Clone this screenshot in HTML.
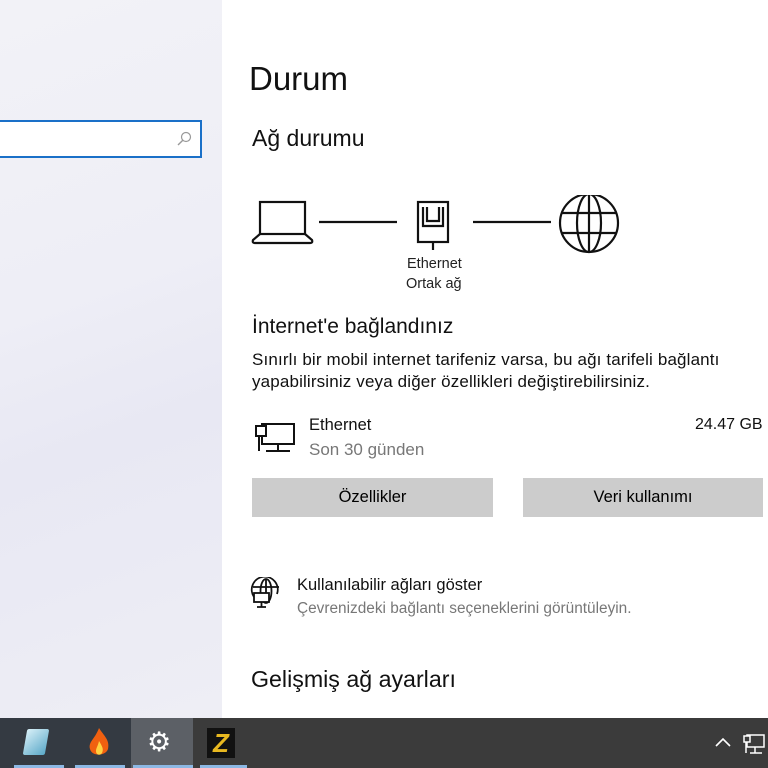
<!DOCTYPE html>
<html><head><meta charset="utf-8"><style>
*{margin:0;padding:0;box-sizing:border-box}
body{width:768px;height:768px;overflow:hidden;background:#fff;font-family:"Liberation Sans",sans-serif;color:#000;position:relative}
.a{position:absolute;white-space:nowrap}
#left{position:absolute;left:0;top:0;width:222px;height:718px;background:linear-gradient(160deg,#f2f2f7 0%,#eeeef6 40%,#e8e8f3 60%,#eeeef5 100%)}
#search{position:absolute;left:-2px;top:120px;width:204px;height:38px;border:2px solid #1a70c8;background:#fff}
.btn{position:absolute;height:39px;background:#cccccc;font-size:16.5px;text-align:center;line-height:39px}
#tb{position:absolute;left:0;top:718px;width:768px;height:50px;background:#3b3b3b}
</style></head><body>
<div id="left"><div id="search">
<svg class="a" style="left:176px;top:9px" width="16" height="16" viewBox="0 0 16 16"><circle cx="10" cy="6" r="4.5" fill="none" stroke="#999" stroke-width="1.2"/><path d="M6.8 9.2 L2 14" stroke="#999" stroke-width="1.4"/></svg>
</div></div>

<div class="a" style="left:249px;top:60px;font-size:33px;color:#111">Durum</div>
<div class="a" style="left:252px;top:125px;font-size:23px;color:#111">Ağ durumu</div>

<svg class="a" style="left:250px;top:195px" width="372" height="100" viewBox="0 0 372 100" fill="none" stroke="#111" stroke-width="2.2">
<rect x="10" y="7" width="45" height="32"/>
<path d="M10 39 L3 45 Q2 48 5 48 L60 48 Q63 48 62 45 L55 39"/>
<path d="M69 27 H147"/>
<rect x="168" y="7" width="30" height="40"/>
<path d="M173 12 V31 H193 V12 M177 12 V26 H189 V12"/>
<path d="M183 47 V55"/>
<path d="M223 27 H301"/>
<circle cx="339" cy="28" r="29"/>
<ellipse cx="339" cy="28" rx="12" ry="29"/>
<path d="M311 18 H367 M311 38 H367 M339 -1 V57"/>
</svg>
<div class="a" style="left:407px;top:256px;font-size:14.5px;color:#222">Ethernet</div>
<div class="a" style="left:406px;top:276px;font-size:14.5px;color:#222">Ortak ağ</div>

<div class="a" style="left:252px;top:315px;font-size:21px;color:#111">İnternet'e bağlandınız</div>
<div class="a" style="left:252px;top:350px;font-size:17px;color:#111;letter-spacing:0.15px">Sınırlı bir mobil internet tarifeniz varsa, bu ağı tarifeli bağlantı</div>
<div class="a" style="left:252px;top:372px;font-size:17px;color:#111;letter-spacing:0.15px">yapabilirsiniz veya diğer özellikleri değiştirebilirsiniz.</div>

<svg class="a" style="left:254px;top:420px" width="44" height="36" viewBox="0 0 44 36" fill="none" stroke="#111" stroke-width="2">
<rect x="8" y="4" width="32" height="20"/>
<rect x="2" y="6" width="10" height="10" fill="#fff"/>
<path d="M5 16 V31 M24 24 V31 M12 31 H36"/>
</svg>
<div class="a" style="left:309px;top:416px;font-size:16.5px;color:#111">Ethernet</div>
<div class="a" style="left:309px;top:440px;font-size:17px;color:#777">Son 30 günden</div>
<div class="a" style="left:695px;top:416px;font-size:16px;color:#111">24.47 GB</div>

<div class="btn" style="left:252px;top:478px;width:241px">Özellikler</div>
<div class="btn" style="left:523px;top:478px;width:240px">Veri kullanımı</div>

<svg class="a" style="left:250px;top:577px" width="32" height="32" viewBox="0 0 32 32" fill="none" stroke="#111" stroke-width="1.8">
<path d="M27 17 A13 13 0 1 0 4 20"/>
<ellipse cx="16" cy="14" rx="5.5" ry="12"/>
<path d="M3 10 H29 M16 2 V16"/>
<rect x="4" y="16" width="15" height="9" fill="#fff"/>
<path d="M11.5 25 V30 M7 30 H16"/>
</svg>
<div class="a" style="left:297px;top:576px;font-size:16.5px;color:#111">Kullanılabilir ağları göster</div>
<div class="a" style="left:297px;top:600px;font-size:15.4px;color:#777">Çevrenizdeki bağlantı seçeneklerini görüntüleyin.</div>

<div class="a" style="left:251px;top:666px;font-size:23.2px;color:#111">Gelişmiş ağ ayarları</div>

<div id="tb">
<div class="a" style="left:0;top:0;width:131px;height:50px;background:#343a42"></div>
<div class="a" style="left:131px;top:0;width:62px;height:50px;background:#5c6066"></div>
<div class="a" style="left:14px;top:47px;width:50px;height:3px;background:#8cb8e4"></div>
<div class="a" style="left:75px;top:47px;width:50px;height:3px;background:#8cb8e4"></div>
<div class="a" style="left:133px;top:47px;width:60px;height:3px;background:#8cb8e4"></div>
<div class="a" style="left:200px;top:47px;width:47px;height:3px;background:#8cb8e4"></div>
<div class="a" style="left:25px;top:11px;width:22px;height:26px;background:linear-gradient(135deg,#d8f0f8,#5aa8c8);transform:skewX(-10deg);border-radius:2px"></div>
<svg class="a" style="left:86px;top:9px" width="26" height="32" viewBox="0 0 26 32"><path d="M13 1 C18 9 24 13 22 22 C20 29 6 30 4 22 C2 15 9 12 13 1Z" fill="#f06010"/><path d="M13 14 C16 19 18 22 16 26 C14 29 10 28 10 24 C10 21 12 19 13 14Z" fill="#ffd040"/></svg>
<div class="a" style="left:147px;top:10px;font-size:27px;color:#fff;line-height:28px">⚙</div>
<div class="a" style="left:207px;top:10px;width:28px;height:30px;background:#111;color:#e8b820;font-weight:bold;font-size:26px;text-align:center;line-height:30px;font-style:italic">Z</div>
<svg class="a" style="left:714px;top:18px" width="18" height="12" viewBox="0 0 18 12"><path d="M2 10 L9 3 L16 10" stroke="#fff" stroke-width="1.6" fill="none"/></svg>
<svg class="a" style="left:742px;top:14px" width="24" height="24" viewBox="0 0 24 24" fill="none" stroke="#fff" stroke-width="1.5"><rect x="5" y="3" width="17" height="12"/><rect x="2" y="4" width="6" height="6" fill="#3b3b3b"/><path d="M4 10 V21 M13 15 V21 M8 21 H20"/></svg>
</div>
</body></html>
